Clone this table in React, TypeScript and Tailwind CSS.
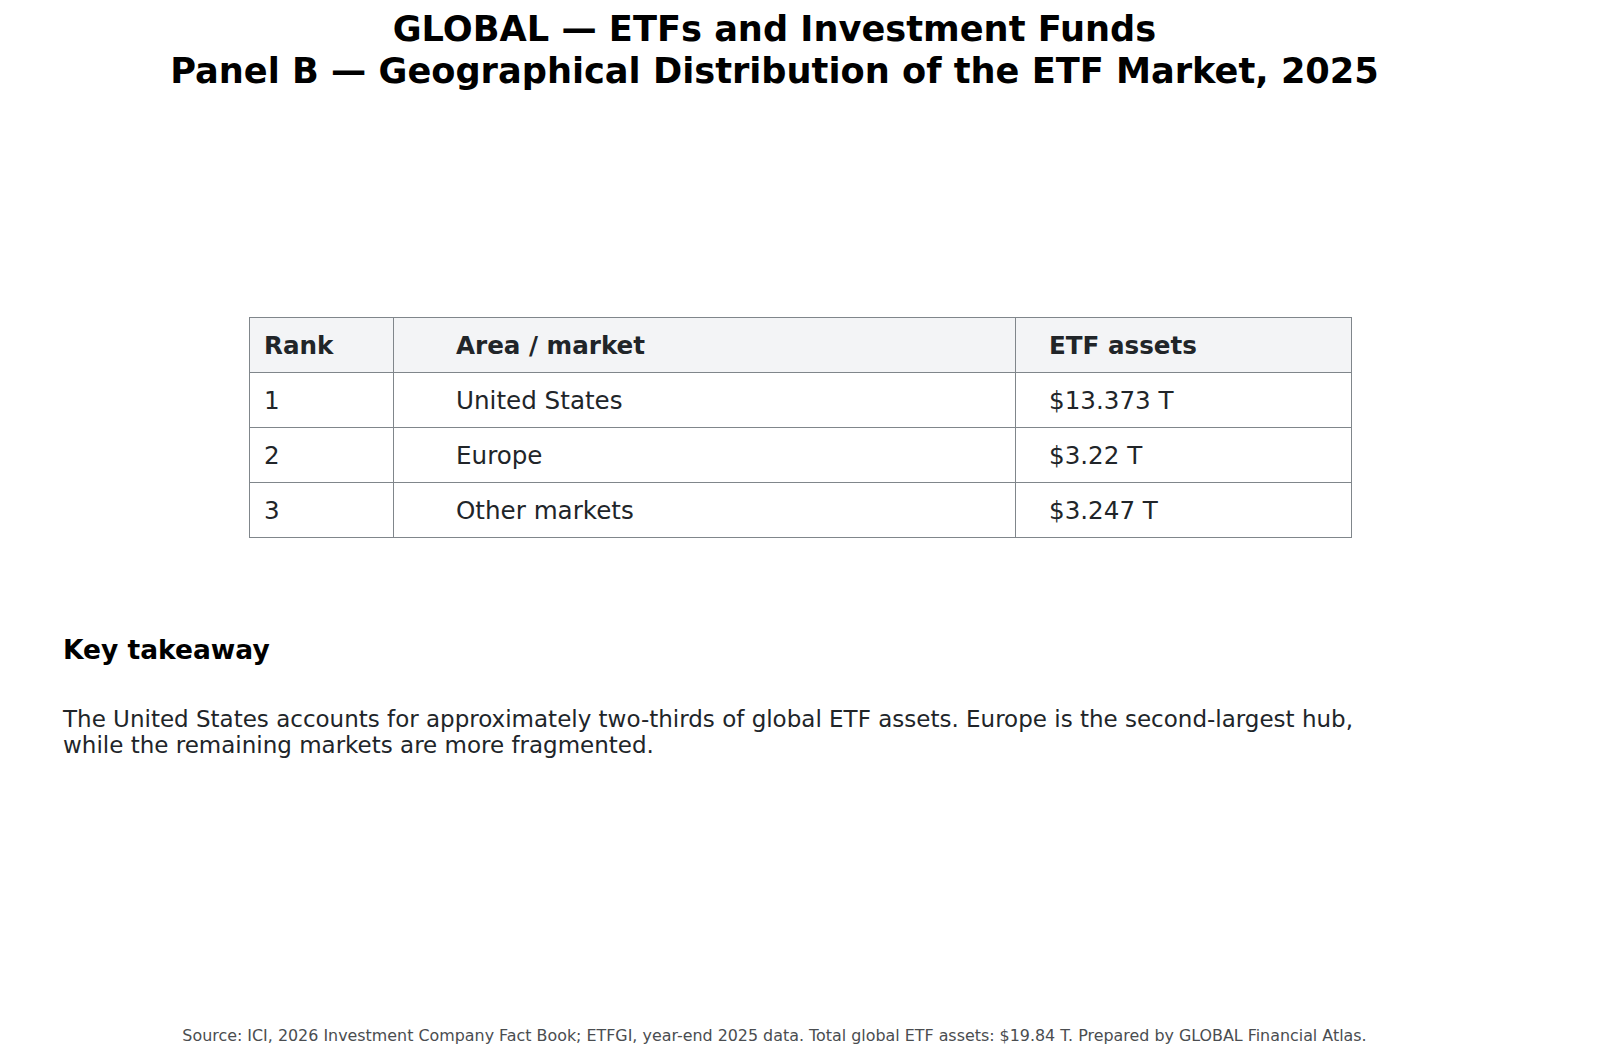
const rows = [
  { rank: '1', area: 'United States', assets: '$13.373 T' },
  { rank: '2', area: 'Europe', assets: '$3.22 T' },
  { rank: '3', area: 'Other markets', assets: '$3.247 T' },
];

const font = { fontFamily: '"DejaVu Sans", Verdana, sans-serif' };

const cell = 'h-[55px] border border-[#80868b] p-0 pt-[3px] align-middle';

export default function App() {
  return (
    <div className="flex h-[1056px] w-[1600px] flex-col bg-white" style={font}>
      <header className="w-[1549px] pt-[8px] text-center text-[35.2px] font-bold leading-[42px] text-black">
        <div>GLOBAL — ETFs and Investment Funds</div>
        <div>Panel B — Geographical Distribution of the ETF Market, 2025</div>
      </header>

      <table className="ml-[249px] mt-[225px] w-[1102px] table-fixed border-collapse text-[24.6px] text-[#212529]">
        <colgroup>
          <col className="w-[144px]" />
          <col className="w-[622px]" />
          <col className="w-[336px]" />
        </colgroup>
        <thead>
          <tr className="bg-[#f3f4f6] text-left font-bold">
            <th className={`${cell} pl-[14px]`}>Rank</th>
            <th className={`${cell} pl-[62px]`}>Area / market</th>
            <th className={`${cell} pl-[33px]`}>ETF assets</th>
          </tr>
        </thead>
        <tbody>
          {rows.map((row) => (
            <tr key={row.rank}>
              <td className={`${cell} pl-[14px]`}>{row.rank}</td>
              <td className={`${cell} pl-[62px]`}>{row.area}</td>
              <td className={`${cell} pl-[33px]`}>{row.assets}</td>
            </tr>
          ))}
        </tbody>
      </table>

      <section className="ml-[63px] mt-[96px]">
        <h2 className="text-[26.5px] font-bold leading-[31px] text-black">Key takeaway</h2>
        <p className="mt-[42px] text-[23px] leading-[25.5px] text-[#212529]">
          The United States accounts for approximately two-thirds of global ETF assets. Europe is the second-largest hub,
          <br />
          while the remaining markets are more fragmented.
        </p>
      </section>

      <footer className="mt-auto mb-[11px] w-[1549px] text-center text-[15.9px] leading-[19px] text-[#4a4d50]">
        Source: ICI, 2026 Investment Company Fact Book; ETFGI, year-end 2025 data. Total global ETF assets: $19.84 T. Prepared by GLOBAL Financial Atlas.
      </footer>
    </div>
  );
}
